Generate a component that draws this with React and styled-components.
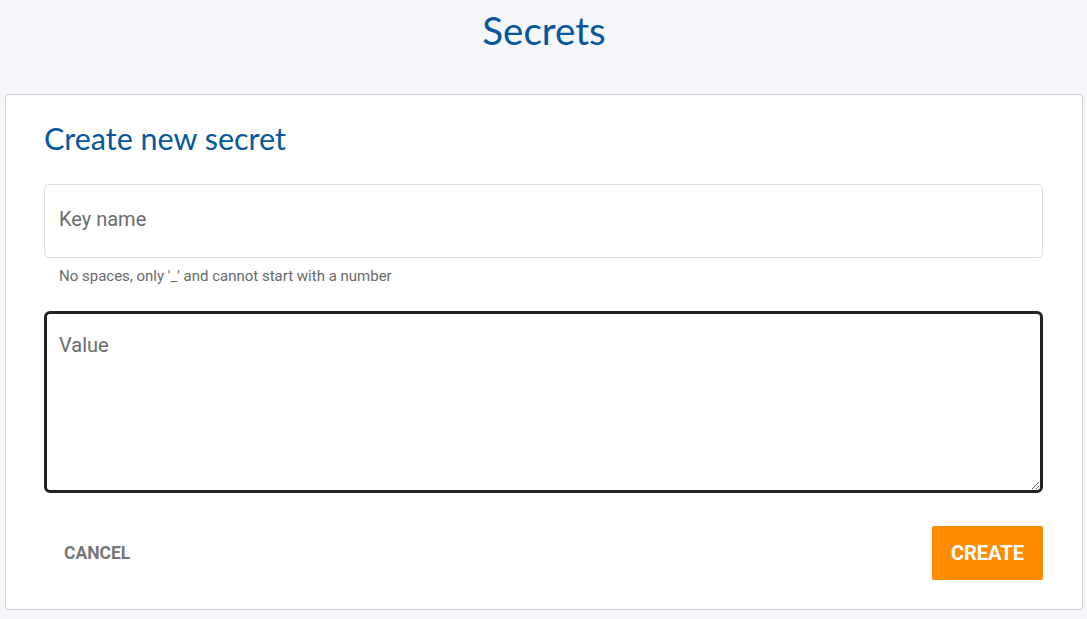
import React from 'react';
import styled, { createGlobalStyle } from 'styled-components';

const GlobalStyle = createGlobalStyle`
	html, body {
		margin: 0;
		padding: 0;
		background: #f4f6fa;
	}
	body {
		font-family: Roboto, 'Liberation Sans', sans-serif;
	}
	* {
		box-sizing: border-box;
	}
`;

const Page = styled.div`
	display: flex;
	flex-direction: column;
	padding: 0 4px 0 5px;
	min-height: 619px;
`;

const PageTitle = styled.h1`
	margin: 0;
	height: 94px;
	padding-top: 8px;
	text-align: center;
	font-family: Lato, 'Open Sans', sans-serif;
	font-weight: 400;
	font-size: 38.5px;
	line-height: 44px;
	color: #07579e;
`;

const Card = styled.div`
	background: #fff;
	border: 1px solid #c9ccd1;
	border-radius: 4px;
	padding: 23px 39px 29px 38px;
	display: flex;
	flex-direction: column;
`;

const CardTitle = styled.h2`
	margin: 0 0 26px;
	font-family: Lato, 'Open Sans', sans-serif;
	font-weight: 400;
	font-size: 30.5px;
	line-height: 40px;
	color: #07579e;
`;

const Field = styled.input`
	all: unset;
	box-sizing: border-box;
	width: 100%;
	height: 74px;
	border: 1px solid #dcdcdc;
	border-radius: 5px;
	padding: 0 14px 4px;
	font-family: Roboto, sans-serif;
	font-size: 20px;
	color: #333;
	&::placeholder {
		color: #6b6b6b;
	}
`;

const Hint = styled.div`
	padding: 9px 0 0 15px;
	font-size: 15px;
	line-height: 18px;
	color: #6a6a6a;
	height: 53px;
`;

const TextArea = styled.textarea`
	width: 100%;
	height: 182px;
	border: 3px solid #222;
	border-radius: 6px;
	padding: 19px 12px;
	font-family: Roboto, sans-serif;
	font-size: 20px;
	color: #333;
	outline: none;
	resize: vertical;
	display: block;
	&::placeholder {
		color: #6b6b6b;
	}
`;

const Actions = styled.div`
	display: flex;
	justify-content: space-between;
	align-items: center;
	margin-top: 33px;
`;

const Button = styled.button`
	border: none;
	border-radius: 2px;
	height: 54px;
	padding: 0 ${p => (p.$primary ? '19px' : '20px')};
	background: ${p => (p.$primary ? '#ff8c00' : 'transparent')};
	color: ${p => (p.$primary ? '#fff' : '#767676')};
	font-family: Roboto, sans-serif;
	font-weight: 700;
	font-size: ${p => (p.$primary ? '20px' : '17.5px')};
	text-transform: uppercase;
	cursor: pointer;
`;

export default function App() {
	return (
		<>
			<GlobalStyle />
			<Page>
				<PageTitle>Secrets</PageTitle>
				<Card>
					<CardTitle>Create new secret</CardTitle>
					<Field type='text' placeholder='Key name' />
					<Hint>No spaces, only '_' and cannot start with a number</Hint>
					<TextArea placeholder='Value' />
					<Actions>
						<Button>Cancel</Button>
						<Button $primary>Create</Button>
					</Actions>
				</Card>
			</Page>
		</>
	);
}
